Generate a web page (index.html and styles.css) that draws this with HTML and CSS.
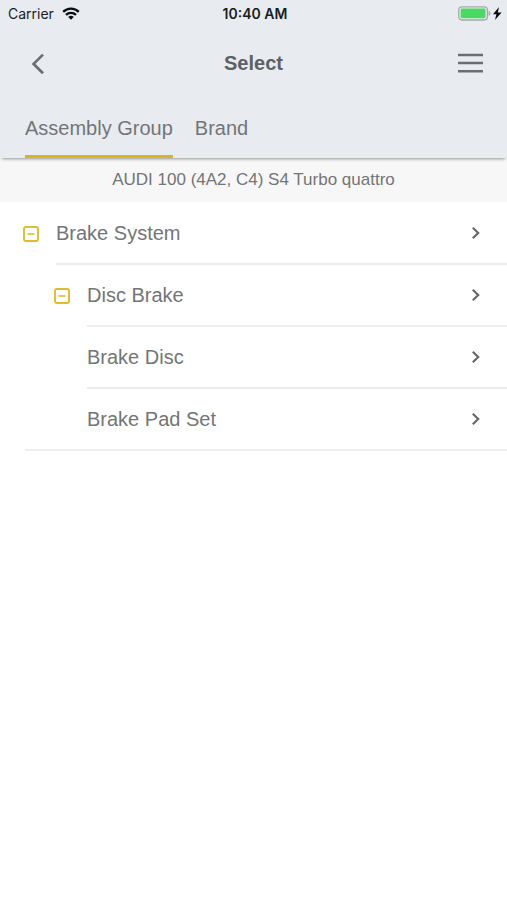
FILE: index.html
```html
<!DOCTYPE html>
<html lang="en">
<head>
<meta charset="utf-8">
<meta name="viewport" content="width=device-width, initial-scale=1">
<title>Select</title>
<link rel="stylesheet" href="styles.css">
</head>
<body>
<header class="header">
  <div class="status">
    <div class="status-left">
      <span>Carrier</span>
      <svg width="18" height="13" viewBox="0 0 18 13" aria-hidden="true">
        <g fill="none" stroke="#0b0c0d" stroke-width="2.3">
          <path d="M1.2 4.9a11 11 0 0 1 15.6 0"/>
          <path d="M4 7.9a7 7 0 0 1 10 0"/>
        </g>
        <path d="M9 12.8 6.2 10a4 4 0 0 1 5.6 0z" fill="#0b0c0d"/>
      </svg>
    </div>
    <span class="time">10:40 AM</span>
    <div class="status-right">
      <svg width="44" height="15" viewBox="0 0 44 15" aria-hidden="true">
        <rect x=".8" y=".8" width="28.6" height="13.2" rx="3.2" fill="#e8ecf1" stroke="#a3a8a9" stroke-width="1.3"/>
        <rect x="2.7" y="2.6" width="24.8" height="9.6" rx="1.4" fill="#4bd964"/>
        <path d="M30.6 4.8c2.4.6 2.4 4.6 0 5.2z" fill="#a3a8a9"/>
        <path d="M41 1 35 8.2h3.4L37 14l6.6-7.4h-3.8z" fill="#0b0c0d"/>
      </svg>
    </div>
  </div>
  <div class="navbar">
    <button class="icon-button" type="button" aria-label="Back">
      <svg width="26" height="26" viewBox="0 0 26 26" aria-hidden="true"><path d="M19 4.6 9.6 13.9 19 23.2" fill="none" stroke="#6b6e70" stroke-width="2.7"/></svg>
    </button>
    <h1 class="title">Select</h1>
    <button class="icon-button" type="button" aria-label="Menu">
      <svg width="26" height="26" viewBox="0 0 26 26" aria-hidden="true"><path d="M1 5h25M1 13h25M1 21.3h25" fill="none" stroke="#6b6e70" stroke-width="2.4"/></svg>
    </button>
  </div>
  <nav class="tabs">
    <a class="tab active" href="#assembly">Assembly Group</a>
    <a class="tab" href="#brand">Brand</a>
  </nav>
</header>
<main>
  <p class="vehicle">AUDI 100 (4A2, C4) S4 Turbo quattro</p>
  <ul class="tree">
    <li class="level-1">
      <button class="toggle" type="button" aria-label="Collapse Brake System">
        <svg width="16" height="16" viewBox="0 0 16 16" aria-hidden="true"><rect x="1" y="1" width="14" height="14" rx="1.8" fill="none" stroke="#e0bd2f" stroke-width="1.9"/><path d="M4.5 8h7" stroke="#e0bd2f" stroke-width="1.6"/></svg>
      </button>
      <a class="row" href="#brake-system">Brake System
        <svg class="chevron" width="10" height="14" viewBox="0 0 10 14" aria-hidden="true"><path d="m1.8 1.8 5.4 5.2-5.4 5.2"/></svg>
      </a>
    </li>
    <li class="level-2">
      <button class="toggle" type="button" aria-label="Collapse Disc Brake">
        <svg width="16" height="16" viewBox="0 0 16 16" aria-hidden="true"><rect x="1" y="1" width="14" height="14" rx="1.8" fill="none" stroke="#e0bd2f" stroke-width="1.9"/><path d="M4.5 8h7" stroke="#e0bd2f" stroke-width="1.6"/></svg>
      </button>
      <a class="row" href="#disc-brake">Disc Brake
        <svg class="chevron" width="10" height="14" viewBox="0 0 10 14" aria-hidden="true"><path d="m1.8 1.8 5.4 5.2-5.4 5.2"/></svg>
      </a>
    </li>
    <li class="level-3">
      <a class="row" href="#brake-disc">Brake Disc
        <svg class="chevron" width="10" height="14" viewBox="0 0 10 14" aria-hidden="true"><path d="m1.8 1.8 5.4 5.2-5.4 5.2"/></svg>
      </a>
    </li>
    <li class="level-3 last">
      <a class="row" href="#brake-pad-set">Brake Pad Set
        <svg class="chevron" width="10" height="14" viewBox="0 0 10 14" aria-hidden="true"><path d="m1.8 1.8 5.4 5.2-5.4 5.2"/></svg>
      </a>
    </li>
  </ul>
</main>
</body>
</html>
```
FILE: styles.css
```css
* {
  box-sizing: border-box;
}

body {
  margin: 0;
  background: #fff;
  color: #737576;
  font-family: "Liberation Sans", Arial, sans-serif;
  font-size: 20px;
}

button {
  padding: 0;
  border: 0;
  background: none;
  cursor: pointer;
}

a {
  color: inherit;
  text-decoration: none;
}

svg {
  display: block;
}

.header {
  position: relative;
  background: #e8ecf1;
  box-shadow: 0 3px 3px -2px rgba(0, 0, 0, 0.4);
}

.status {
  display: grid;
  grid-template-columns: 1fr auto 1fr;
  align-items: center;
  height: 27px;
  padding: 0 5px 0 8px;
  color: #1b1c1e;
  font-family: Inter, sans-serif;
  font-size: 14px;
}

.status-left {
  display: flex;
  align-items: center;
  gap: 8px;
}

.status-right {
  display: flex;
  justify-content: flex-end;
}

.time {
  font-weight: 600;
}

.navbar {
  display: flex;
  align-items: center;
  justify-content: space-between;
  height: 71px;
  padding: 0 24px;
}

.title {
  margin: 0;
  color: #5e6163;
  font-size: 20px;
  line-height: 24px;
}

.tabs {
  display: flex;
  gap: 22px;
  height: 60px;
  padding: 0 25px;
}

.tab {
  line-height: 60px;
  border-bottom: 3px solid transparent;
}

.tab.active {
  border-color: #d6b722;
}

.vehicle {
  margin: 0;
  background: #f7f7f7;
  font-size: 17px;
  line-height: 44px;
  text-align: center;
}

.tree {
  margin: 0;
  padding: 1px 0 0;
  list-style: none;
}

.tree li {
  display: flex;
  align-items: center;
}

.level-1 {
  padding-left: 23px;
}

.level-2 {
  padding-left: 54px;
}

.level-3 {
  padding-left: 87px;
}

.toggle {
  margin-right: 17px;
}

.row {
  display: flex;
  flex: 1;
  align-items: center;
  justify-content: space-between;
  height: 62px;
  padding-right: 26px;
  border-bottom: 2px solid #ededee;
}

.level-3.last {
  padding-left: 25px;
}

.last .row {
  padding-left: 62px;
}

.chevron {
  fill: none;
  stroke: #66686a;
  stroke-width: 2.2;
}
```
